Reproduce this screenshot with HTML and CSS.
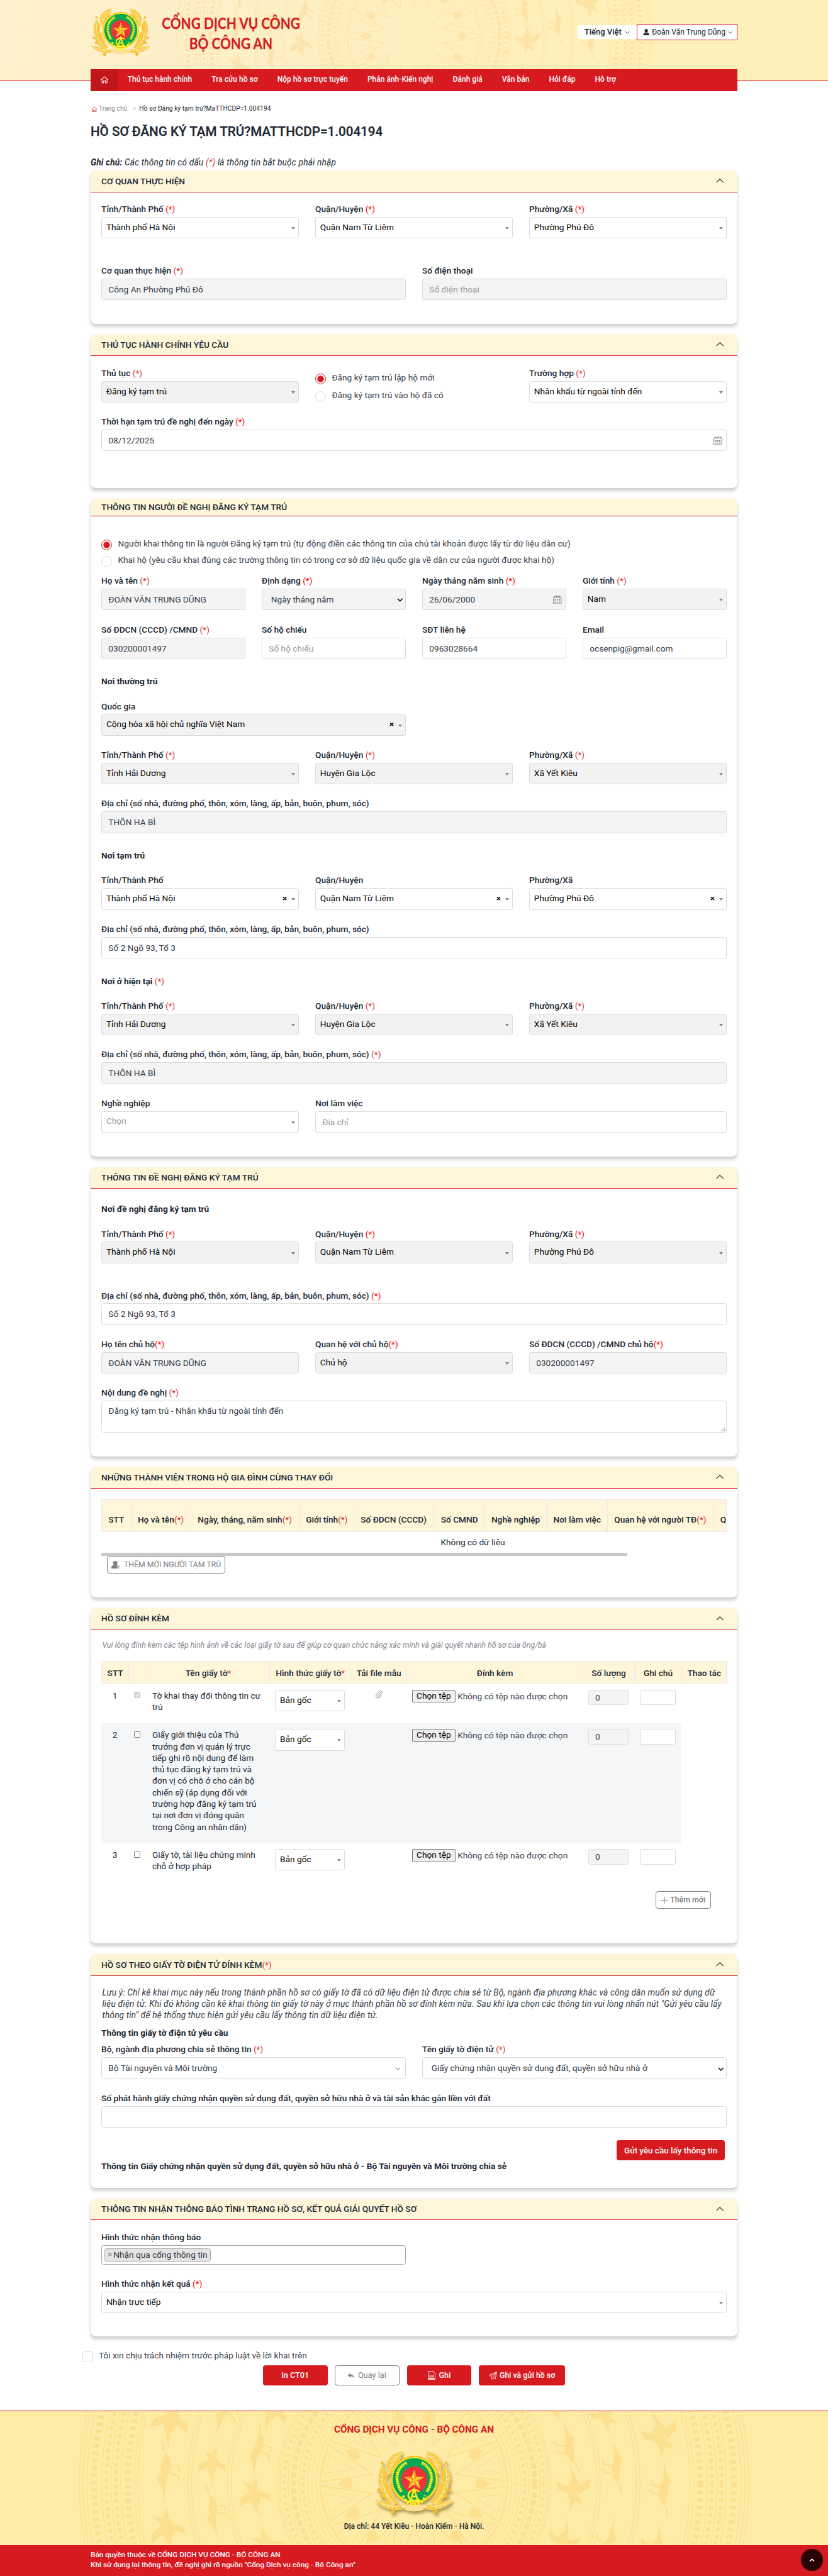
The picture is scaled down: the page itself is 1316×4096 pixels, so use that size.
FILE: index.html
```html
<!DOCTYPE html>
<html lang="vi">
<head>
<meta charset="utf-8">
<title>Cổng dịch vụ công - Bộ Công an</title>
<link rel="stylesheet" href="styles.css">
</head>
<body>
<svg class="defs" width="0" height="0" aria-hidden="true">
  <defs>
    <!-- bronze drum ornament, centred on 0,0 -->
    <g id="wedge" fill="none" stroke="currentColor" stroke-width="3">
      <path d="M0 -98 L-44 -214 H44Z"/><path d="M0 -128 L-32 -208 M0 -128 L32 -208" stroke-dasharray="2 6"/><path d="M0 -146 L-22 -206 H22Z" stroke-width="2"/>
      <path d="M0 -160c-5 12-14 20-10 32c3 8 17 8 20 0c4-12-5-20-10-32z" transform="rotate(12.857) translate(0 -20)" fill="currentColor" stroke="none"/>
      <path d="M31 -190a24 24 0 0 1 34 -8" stroke-width="5" stroke-dasharray="2 4"/>
    </g>
    <g id="wedge2"><use href="#wedge"/><use href="#wedge" transform="rotate(25.714)"/></g>
    <g id="bird" fill="currentColor" stroke="none">
      <path d="M-46 8 L-20 -4 C-12 -12 0 -12 8 -6 L34 -22 L26 -4 L44 6 L22 8 C10 16 -8 14 -18 4Z"/>
      <path d="M-4 -8 L-18 -34 L0 -30 L14 -8Z M0 10 L-12 34 L4 30 L14 8Z"/>
    </g>
    <g id="crane">
      <path fill="currentColor" d="M-60 4 L-22 -6 C-14 -18 -4 -16 2 -6 C18 -10 30 -2 48 0 L36 10 C20 16 4 12 -8 6 C-16 4 -22 2 -60 4Z"/>
      <path d="M4 10 L-2 30 L-12 32 M20 10 L18 30 L8 32 M48 -2 L70 -6" fill="none" stroke="currentColor" stroke-width="4"/>
    </g>
    <g id="drum">
      <g><use href="#wedge2"/><use href="#wedge2" transform="rotate(51.43)"/><use href="#wedge2" transform="rotate(102.86)"/><use href="#wedge2" transform="rotate(154.29)"/><use href="#wedge2" transform="rotate(205.71)"/><use href="#wedge2" transform="rotate(257.14)"/><use href="#wedge2" transform="rotate(308.57)"/></g>
      <g fill="none" stroke="currentColor" stroke-width="2">
        <circle r="218"/><circle r="227"/><circle r="237" stroke-width="4" stroke-dasharray="4 7"/><circle r="247"/>
        <circle r="257" stroke-width="8" stroke-dasharray="8 8"/><circle r="267"/><circle r="280" stroke-width="12" stroke-dasharray="14 5"/><circle r="292"/>
        <circle r="301" stroke-width="8" stroke-dasharray="8 8"/><circle r="310"/><circle r="316"/>
        <circle r="424"/><circle r="432"/><circle r="516"/><circle r="524"/><circle r="640"/><circle r="648"/>
        <circle r="664" stroke-width="14" stroke-dasharray="9 8"/><circle r="680"/><circle r="691" stroke-width="9" stroke-dasharray="9 8"/><circle r="702"/><circle r="713" stroke-width="9" stroke-dasharray="9 8"/><circle r="724"/>
        <circle r="742" stroke-width="14" stroke-dasharray="9 8"/><circle r="758"/><circle r="768"/><circle r="776"/>
      </g>
      <g id="flock">
        <g id="flockq">
          <use href="#bird" transform="rotate(8) translate(0 -370) scale(1.1)"/><use href="#crane" transform="rotate(24) translate(0 -372)"/><use href="#bird" transform="rotate(40) translate(0 -370) scale(1.2)"/>
          <use href="#crane" transform="rotate(4) translate(0 -472)"/><use href="#bird" transform="rotate(18) translate(0 -470)"/><use href="#crane" transform="rotate(33) translate(0 -472)"/>
          <use href="#bird" transform="rotate(2) translate(0 -582) scale(1.2)"/><use href="#crane" transform="rotate(15) translate(0 -580) scale(1.1)"/><use href="#bird" transform="rotate(27) translate(0 -582) scale(1.3)"/><use href="#crane" transform="rotate(39) translate(0 -582)"/>
        </g>
        <use href="#flockq" transform="rotate(51.43)"/><use href="#flockq" transform="rotate(102.86)"/><use href="#flockq" transform="rotate(154.29)"/><use href="#flockq" transform="rotate(205.71)"/><use href="#flockq" transform="rotate(257.14)"/><use href="#flockq" transform="rotate(308.57)"/>
      </g>
    </g>
    <!-- left half of the golden laurel -->
    <g id="laurel">
      <path fill="#f9cb45" stroke="#fbe6a0" stroke-width=".8" d="M47 1 C36 2 25 9 20 22 C22 30 20 38 22 44 C34 32 46 18 47 1Z"/>
      <path fill="#f8c63c" stroke="#fbe6a0" stroke-width=".8" d="M12 27 C5 38 3 50 9 66 C17 62 22 52 20 40 C18 34 15 30 12 27Z"/>
      <path fill="#f9cb45" stroke="#fbe6a0" stroke-width=".8" d="M10 58 C8 72 13 86 30 96 L40 92 C31 82 29 66 22 54Z"/>
      <path fill="#f9cb45" stroke="#fbe6a0" stroke-width=".8" d="M0 87 C8 88 24 90 34 96 L52 95 C56 96 56 101 52 102 L38 104 C26 104 8 100 0 87Z"/>
      <path d="M45 4 C34 18 27 26 23 40 M12 32 C12 45 12 52 11 62 M14 62 C18 76 25 88 34 94 M4 89 C16 96 28 99 40 99 M40 9l-9 3 M35 15l-10 4 M31 22l-8 4 M8 40l5 4 M6 48l6 4 M13 72l6 1 M18 80l6 0 M12 93l4 4 M20 94l4 6 M28 95l3 7" fill="none" stroke="#fdf0c0" stroke-width="1.2"/>
      <circle cx="12" cy="21" r="2.4" fill="#f4bb35"/><circle cx="6" cy="69" r="2.9" fill="#f4bb35"/><circle cx="11" cy="80" r="3" fill="#f4bb35"/><path d="M12 20l4 7M7 70l9 6M11 80l10 6M35 97l-3 8" stroke="#f4bb35" stroke-width="2"/><circle cx="31" cy="107" r="3.8" fill="#f4bb35"/>
      <ellipse cx="50" cy="98" rx="5" ry="2.3" fill="#fff6d8" stroke="#f4bb35" stroke-width="1"/>
    </g>
    <g id="ears" fill="none" stroke="#fdf01e">
      <path d="M55 21 C36 30 33 52 46 72" stroke-width="1.2"/><path d="M55 21 C36 30 33 52 46 72" stroke-width="5.5" stroke-dasharray="2.6 1.2"/>
    </g>
    <symbol id="emblem" viewBox="0 0 137 112">
      <path d="M52 95h33v9c-10 4-23 4-33 0z" fill="#fbe09a"/>
      <use href="#laurel"/><use href="#laurel" transform="translate(137 0) scale(-1 1)"/>
      <circle cx="68.5" cy="51" r="42.3" fill="#f9c22f"/><circle cx="68.5" cy="51" r="40" fill="#fdf01e"/><circle cx="68.5" cy="51" r="38.3" fill="#0aa651"/>
      <use href="#ears"/><use href="#ears" transform="translate(137 0) scale(-1 1)"/>
      <circle cx="68.5" cy="51" r="23.2" fill="#ee3338"/>
      <g fill="none" stroke="#fdf01e"><path d="M49 79a20 20 0 0 0 39 0" stroke-width="5" stroke-dasharray="4 2.5"/><path d="M77 72a11 9.500 0 1 0 0 13" stroke-width="3"/><path d="M62 88L68.500 68L75 88M59 88h6M72 88h7M65 81h8" stroke-width="3"/></g>
      <path fill="#ffdf1c" d="M68.500 33.500l4.300 12.600h13.300l-10.700 8 4 12.800-10.900-7.800-10.900 7.800 4-12.800-10.700-8h13.300z"/>
      <path fill="#f3913a" d="M68.500 33.500v19l4.300-6.400zM86.100 46.100l-17.600 6.400 6.900 1.600zM79.400 66.900l-10.900-14.400v6.600zM57.600 66.900l10.900-14.400-6.900 1.600zM50.900 46.100l17.600 6.400-4.300-6.400z"/>
    </symbol>
    <symbol id="home" viewBox="0 0 18 17"><path d="M1 8.500L9 1.200L17 8.500M3.200 7.500V16H7V11h4v5h3.800V7.500" fill="none" stroke="currentColor" stroke-width="1.500"/></symbol>
    <symbol id="up" viewBox="0 0 18 10"><path d="M.8 9L9 1.200L17.200 9" fill="none" stroke="currentColor" stroke-width="1.600"/></symbol>
    <symbol id="down" viewBox="0 0 14 8"><path d="M1 1l6 6 6-6" fill="none" stroke="currentColor" stroke-width="1.500"/></symbol>
    <symbol id="down-bold" viewBox="0 0 14 9"><path d="M1.300 1.300l5.700 5.700 5.700-5.700" fill="none" stroke="currentColor" stroke-width="2.600"/></symbol>
    <symbol id="calendar" viewBox="0 0 20 20"><path d="M1 3h18v16H1zM4.500 0v5M8.200 0v5M11.800 0v5M15.500 0v5" fill="none" stroke="currentColor" stroke-width="1.400"/><path d="M4 9.500h12M4 12.500h12M4 15.500h12" stroke="currentColor" stroke-width="2" stroke-dasharray="2.600 2" fill="none"/></symbol>
    <symbol id="clip" viewBox="0 0 18 20"><path d="M13.500 5.500L6.500 13.500a1.500 1.500 0 0 0 2.300 2L15.500 8a3.600 3.600 0 0 0-5.300-5L3 11.500a5 5 0 0 0 7.500 6.500L16 12" fill="none" stroke="currentColor" stroke-width="1.300"/></symbol>
    <symbol id="user" viewBox="0 0 16 16"><ellipse cx="8" cy="4.600" rx="4" ry="4.600" fill="currentColor"/><path d="M1 16c-.6-5 2-6.500 4.500-7l2.500 2.500L10.500 9c2.500.5 5.100 2 4.500 7z" fill="currentColor"/></symbol>
  </defs>
</svg>

<header class="header">
  <svg class="drum drum-top" viewBox="0 0 1920 186"><use href="#drum" transform="translate(960 84) scale(.71)"/></svg>
  <div class="header-in">
    <svg class="logo"><use href="#emblem"/></svg>
    <div class="brand"><span>CỔNG DỊCH VỤ CÔNG</span><span>BỘ CÔNG AN</span></div>
    <div class="tools">
      <div class="lang"><span>Tiếng Việt</span><svg width="12" height="7"><use href="#down"/></svg></div>
      <div class="account"><svg width="15" height="15"><use href="#user"/></svg><span>Đoàn Văn Trung Dũng</span><svg width="11" height="7"><use href="#down"/></svg></div>
    </div>
  </div>
</header>

<div class="page">
  <nav class="nav">
    <a class="nav-home"><svg width="18" height="17"><use href="#home"/></svg></a>
    <a>Thủ tục hành chính</a><a>Tra cứu hồ sơ</a><a>Nộp hồ sơ trực tuyến</a><a>Phản ánh-Kiến nghị</a><a>Đánh giá</a><a>Văn bản</a><a>Hỏi đáp</a><a>Hỗ trợ</a>
  </nav>
  <div class="crumbs"><svg width="14" height="14"><use href="#home"/></svg><span class="crumb-home">Trang chủ</span><span class="crumb-sep">&gt;</span><span class="crumb-here">Hồ sơ Đăng ký tạm trú?MaTTHCDP=1.004194</span></div>
  <h1>HỒ SƠ ĐĂNG KÝ TẠM TRÚ?MATTHCDP=1.004194</h1>
  <p class="note"><b>Ghi chú:</b> Các thông tin có dấu <i class="rq soft">(*)</i> là thông tin bắt buộc phải nhập</p>

  <section class="card card-agency">
    <div class="card-head"><h2>CƠ QUAN THỰC HIỆN</h2><svg class="fold"><use href="#up"/></svg></div>
    <div class="card-body">
      <div class="row c3 roomy">
        <div class="fld"><label>Tỉnh/Thành Phố <i class="rq">(*)</i></label><div class="sel">Thành phố Hà Nội</div></div>
        <div class="fld"><label>Quận/Huyện <i class="rq">(*)</i></label><div class="sel">Quận Nam Từ Liêm</div></div>
        <div class="fld"><label>Phường/Xã <i class="rq">(*)</i></label><div class="sel">Phường Phú Đô</div></div>
      </div>
      <div class="row c2">
        <div class="fld"><label>Cơ quan thực hiện <i class="rq soft">(*)</i></label><div class="inp off">Công An Phường Phú Đô</div></div>
        <div class="fld"><label>Số điện thoại</label><div class="inp off hint">Số điện thoại</div></div>
      </div>
    </div>
  </section>

  <section class="card card-proc">
    <div class="card-head"><h2>THỦ TỤC HÀNH CHÍNH YÊU CẦU</h2><svg class="fold"><use href="#up"/></svg></div>
    <div class="card-body">
      <div class="row c3">
        <div class="fld"><label>Thủ tục <i class="rq soft">(*)</i></label><div class="sel off">Đăng ký tạm trú</div></div>
        <div class="radios radios-proc">
          <div class="radio on"><b></b><span>Đăng ký tạm trú lập hộ mới</span></div>
          <div class="radio"><b></b><span>Đăng ký tạm trú vào hộ đã có</span></div>
        </div>
        <div class="fld"><label>Trường hợp <i class="rq soft">(*)</i></label><div class="sel">Nhân khẩu từ ngoài tỉnh đến</div></div>
      </div>
      <div class="row c1">
        <div class="fld"><label>Thời hạn tạm trú đề nghị đến ngày <i class="rq">(*)</i></label><div class="inp">08/12/2025<svg class="cal"><use href="#calendar"/></svg></div></div>
      </div>
    </div>
  </section>

  <section class="card card-person">
    <div class="card-head short"><h2>THÔNG TIN NGƯỜI ĐỀ NGHỊ ĐĂNG KÝ TẠM TRÚ</h2></div>
    <div class="card-body">
      <div class="radios radios-who">
        <div class="radio on"><b></b><span>Người khai thông tin là người Đăng ký tạm trú (tự động điền các thông tin của chủ tài khoản được lấy từ dữ liệu dân cư)</span></div>
        <div class="radio"><b></b><span>Khai hộ (yêu cầu khai đúng các trường thông tin có trong cơ sở dữ liệu quốc gia về dân cư của người được khai hộ)</span></div>
      </div>
      <div class="row c4">
        <div class="fld"><label>Họ và tên <i class="rq soft">(*)</i></label><div class="inp off">ĐOÀN VĂN TRUNG DŨNG</div></div>
        <div class="fld"><label>Định dạng <i class="rq">(*)</i></label><div class="inp off native">Ngày tháng năm<svg class="chev" width="14" height="9"><use href="#down-bold"/></svg></div></div>
        <div class="fld"><label>Ngày tháng năm sinh <i class="rq">(*)</i></label><div class="inp off">26/06/2000<svg class="cal"><use href="#calendar"/></svg></div></div>
        <div class="fld"><label>Giới tính <i class="rq soft">(*)</i></label><div class="sel off">Nam</div></div>
      </div>
      <div class="row c4">
        <div class="fld"><label>Số ĐDCN (CCCD) /CMND <i class="rq soft">(*)</i></label><div class="inp off">030200001497</div></div>
        <div class="fld"><label>Số hộ chiếu</label><div class="inp hint">Số hộ chiếu</div></div>
        <div class="fld"><label>SĐT liên hệ</label><div class="inp">0963028664</div></div>
        <div class="fld"><label>Email</label><div class="inp">ocsenpig@gmail.com</div></div>
      </div>
      <h3>Nơi thường trú</h3>
      <div class="row c2">
        <div class="fld"><label>Quốc gia</label><div class="sel off"><span>Cộng hòa xã hội chủ nghĩa Việt Nam</span><em>×</em></div></div>
      </div>
      <div class="row c3">
        <div class="fld"><label>Tỉnh/Thành Phố <i class="rq soft">(*)</i></label><div class="sel off">Tỉnh Hải Dương</div></div>
        <div class="fld"><label>Quận/Huyện <i class="rq soft">(*)</i></label><div class="sel off">Huyện Gia Lộc</div></div>
        <div class="fld"><label>Phường/Xã <i class="rq soft">(*)</i></label><div class="sel off">Xã Yết Kiêu</div></div>
      </div>
      <div class="row c1"><div class="fld"><label>Địa chỉ (số nhà, đường phố, thôn, xóm, làng, ấp, bản, buôn, phum, sóc)</label><div class="inp off">THÔN HẠ BÌ</div></div></div>
      <h3>Nơi tạm trú</h3>
      <div class="row c3">
        <div class="fld"><label>Tỉnh/Thành Phố</label><div class="sel"><span>Thành phố Hà Nội</span><em>×</em></div></div>
        <div class="fld"><label>Quận/Huyện</label><div class="sel"><span>Quận Nam Từ Liêm</span><em>×</em></div></div>
        <div class="fld"><label>Phường/Xã</label><div class="sel"><span>Phường Phú Đô</span><em>×</em></div></div>
      </div>
      <div class="row c1"><div class="fld"><label>Địa chỉ (số nhà, đường phố, thôn, xóm, làng, ấp, bản, buôn, phum, sóc)</label><div class="inp">Số 2 Ngõ 93, Tổ 3</div></div></div>
      <h3>Nơi ở hiện tại <i class="rq soft">(*)</i></h3>
      <div class="row c3">
        <div class="fld"><label>Tỉnh/Thành Phố <i class="rq soft">(*)</i></label><div class="sel off">Tỉnh Hải Dương</div></div>
        <div class="fld"><label>Quận/Huyện <i class="rq soft">(*)</i></label><div class="sel off">Huyện Gia Lộc</div></div>
        <div class="fld"><label>Phường/Xã <i class="rq soft">(*)</i></label><div class="sel off">Xã Yết Kiêu</div></div>
      </div>
      <div class="row c1"><div class="fld"><label>Địa chỉ (số nhà, đường phố, thôn, xóm, làng, ấp, bản, buôn, phum, sóc) <i class="rq soft">(*)</i></label><div class="inp off">THÔN HẠ BÌ</div></div></div>
      <div class="row c3">
        <div class="fld"><label>Nghề nghiệp</label><div class="sel hint">Chọn</div></div>
        <div class="fld span2"><label>Nơi làm việc</label><div class="inp hint">Địa chỉ</div></div>
      </div>
    </div>
  </section>

  <section class="card card-request">
    <div class="card-head"><h2>THÔNG TIN ĐỀ NGHỊ ĐĂNG KÝ TẠM TRÚ</h2><svg class="fold"><use href="#up"/></svg></div>
    <div class="card-body">
      <h3>Nơi đề nghị đăng ký tạm trú</h3>
      <div class="row c3 roomy">
        <div class="fld"><label>Tỉnh/Thành Phố <i class="rq">(*)</i></label><div class="sel off">Thành phố Hà Nội</div></div>
        <div class="fld"><label>Quận/Huyện <i class="rq">(*)</i></label><div class="sel off">Quận Nam Từ Liêm</div></div>
        <div class="fld"><label>Phường/Xã <i class="rq">(*)</i></label><div class="sel off">Phường Phú Đô</div></div>
      </div>
      <div class="row c1"><div class="fld"><label>Địa chỉ (số nhà, đường phố, thôn, xóm, làng, ấp, bản, buôn, phum, sóc) <i class="rq">(*)</i></label><div class="inp">Số 2 Ngõ 93, Tổ 3</div></div></div>
      <div class="row c3">
        <div class="fld"><label>Họ tên chủ hộ<i class="rq">(*)</i></label><div class="inp off">ĐOÀN VĂN TRUNG DŨNG</div></div>
        <div class="fld"><label>Quan hệ với chủ hộ<i class="rq">(*)</i></label><div class="sel off">Chủ hộ</div></div>
        <div class="fld"><label>Số ĐDCN (CCCD) /CMND chủ hộ<i class="rq">(*)</i></label><div class="inp off">030200001497</div></div>
      </div>
      <div class="row c1"><div class="fld"><label>Nội dung đề nghị <i class="rq soft">(*)</i></label><div class="inp area">Đăng ký tạm trú - Nhân khẩu từ ngoài tỉnh đến<svg class="grip" viewBox="0 0 10 10"><path d="M0 10L9 0M5 10L10 5" stroke="#555" stroke-width="1.200"/></svg></div></div></div>
    </div>
  </section>

  <section class="card card-family">
    <div class="card-head"><h2>NHỮNG THÀNH VIÊN TRONG HỘ GIA ĐÌNH CÙNG THAY ĐỔI</h2><svg class="fold"><use href="#up"/></svg></div>
    <div class="card-body">
      <div class="fam-scroll">
        <div class="fam-head"><div>STT</div><div>Họ và tên<i class="rq soft">(*)</i></div><div>Ngày, tháng, năm sinh<i class="rq soft">(*)</i></div><div>Giới tính<i class="rq soft">(*)</i></div><div>Số ĐDCN (CCCD)</div><div>Số CMND</div><div>Nghề nghiệp</div><div>Nơi làm việc</div><div>Quan hệ với người TĐ<i class="rq soft">(*)</i></div><div>Q</div></div>
        <div class="fam-empty">Không có dữ liệu</div>
      </div>
      <div class="fam-bar"></div>
      <div class="btn line fam-add"><svg width="20" height="18" viewBox="0 0 20 18"><ellipse cx="9" cy="5" rx="5" ry="5" fill="#7b8086"/><path d="M0 18v-4c1-3 4-4 6-4h6c3 0 5 1 6 4v4z" fill="#7b8086"/><path d="M16 9v8M12.500 13h7" stroke="#fff" stroke-width="3"/><path d="M16 10v6M13 13h6" stroke="#7b8086" stroke-width="1.200"/></svg>THÊM MỚI NGƯỜI TẠM TRÚ</div>
    </div>
  </section>

  <section class="card card-files">
    <div class="card-head"><h2>HỒ SƠ ĐÍNH KÈM</h2><svg class="fold"><use href="#up"/></svg></div>
    <div class="card-body">
      <p class="files-tip">Vui lòng đính kèm các tệp hình ảnh về các loại giấy tờ sau để giúp cơ quan chức năng xác minh và giải quyết nhanh hồ sơ của ông/bà</p>
      <div class="ft ft-head"><div>STT</div><div></div><div>Tên giấy tờ<i class="rq soft">*</i></div><div>Hình thức giấy tờ<i class="rq soft">*</i></div><div>Tải file mẫu</div><div>Đính kèm</div><div>Số lượng</div><div>Ghi chú</div><div>Thao tác</div></div>
      <div class="ft ft-row">
        <div class="mid">1</div><div class="tick"><span class="box ticked"><svg viewBox="0 0 15 15"><path d="M3 7.500l3 3.500 6-8" fill="none" stroke="#fff" stroke-width="2"/></svg></span></div>
        <div>Tờ khai thay đổi thông tin cư<br>trú</div><div><div class="sel">Bản gốc</div></div>
        <div class="clip"><svg width="18" height="20"><use href="#clip"/></svg></div>
        <div class="file"><span class="pick">Chọn tệp</span><span>Không có tệp nào được chọn</span></div>
        <div><div class="inp off mini">0</div></div><div><div class="inp mini"></div></div><div></div>
      </div>
      <div class="ft ft-row tall">
        <div class="mid">2</div><div class="tick"><span class="box"></span></div>
        <div>Giấy giới thiệu của Thủ<br>trưởng đơn vị quản lý trực<br>tiếp ghi rõ nội dung để làm<br>thủ tục đăng ký tạm trú và<br>đơn vị có chỗ ở cho cán bộ<br>chiến sỹ (áp dụng đối với<br>trường hợp đăng ký tạm trú<br>tại nơi đơn vị đóng quân<br>trong Công an nhân dân)</div><div><div class="sel">Bản gốc</div></div>
        <div></div>
        <div class="file"><span class="pick">Chọn tệp</span><span>Không có tệp nào được chọn</span></div>
        <div><div class="inp off mini">0</div></div><div><div class="inp mini"></div></div><div class="blank"></div>
      </div>
      <div class="ft ft-row">
        <div class="mid">3</div><div class="tick"><span class="box"></span></div>
        <div>Giấy tờ, tài liệu chứng minh<br>chỗ ở hợp pháp</div><div><div class="sel">Bản gốc</div></div>
        <div></div>
        <div class="file"><span class="pick">Chọn tệp</span><span>Không có tệp nào được chọn</span></div>
        <div><div class="inp off mini">0</div></div><div><div class="inp mini"></div></div><div></div>
      </div>
      <div class="btn line files-add"><svg width="17" height="17" viewBox="0 0 17 17"><path d="M8.500 0v17M0 8.500h17" stroke="currentColor" stroke-width="1.600"/></svg>Thêm mới</div>
    </div>
  </section>

  <section class="card card-edoc">
    <div class="card-head"><h2>HỒ SƠ THEO GIẤY TỜ ĐIỆN TỬ ĐÍNH KÈM<i class="rq soft">(*)</i></h2><svg class="fold"><use href="#up"/></svg></div>
    <div class="card-body">
      <p class="edoc-tip">Lưu ý: Chỉ kê khai mục này nếu trong thành phần hồ sơ có giấy tờ đã có dữ liệu điện tử được chia sẻ từ Bộ, ngành địa phương khác và công dân muốn sử dụng dữ<br>liệu điện tử. Khi đó không cần kê khai thông tin giấy tờ này ở mục thành phần hồ sơ đính kèm nữa. Sau khi lựa chọn các thông tin vui lòng nhấn nút "Gửi yêu cầu lấy<br>thông tin" để hệ thống thực hiện gửi yêu cầu lấy thông tin dữ liệu điện tử.</p>
      <h4>Thông tin giấy tờ điện tử yêu cầu</h4>
      <div class="row c2">
        <div class="fld"><label>Bộ, ngành địa phương chia sẻ thông tin <i class="rq soft">(*)</i></label><div class="inp">Bộ Tài nguyên và Môi trường<svg class="chev far" width="12" height="7"><use href="#down"/></svg></div></div>
        <div class="fld"><label>Tên giấy tờ điện tử <i class="rq soft">(*)</i></label><div class="inp native">Giấy chứng nhận quyền sử dụng đất, quyền sở hữu nhà ở<svg class="chev" width="14" height="9"><use href="#down-bold"/></svg></div></div>
      </div>
      <div class="row c1"><div class="fld"><label>Số phát hành giấy chứng nhận quyền sử dụng đất, quyền sở hữu nhà ở và tài sản khác gắn liền với đất</label><div class="inp"></div></div></div>
      <div class="btn red edoc-send">Gửi yêu cầu lấy thông tin</div>
      <h4>Thông tin Giấy chứng nhận quyền sử dụng đất, quyền sở hữu nhà ở - Bộ Tài nguyên và Môi trường chia sẻ</h4>
    </div>
  </section>

  <section class="card card-notify">
    <div class="card-head"><h2>THÔNG TIN NHẬN THÔNG BÁO TÌNH TRẠNG HỒ SƠ, KẾT QUẢ GIẢI QUYẾT HỒ SƠ</h2><svg class="fold"><use href="#up"/></svg></div>
    <div class="card-body">
      <div class="row c2"><div class="fld"><label>Hình thức nhận thông báo</label><div class="multi"><span class="tag"><b>×</b>Nhận qua cổng thông tin</span></div></div></div>
      <div class="row c1"><div class="fld"><label>Hình thức nhận kết quả <i class="rq">(*)</i></label><div class="sel">Nhận trực tiếp</div></div></div>
    </div>
  </section>

  <div class="agree"><b></b><span>Tôi xin chịu trách nhiệm trước pháp luật về lời khai trên</span></div>
  <div class="actions">
    <div class="btn red">In CT01</div>
    <div class="btn line"><svg width="15" height="13" viewBox="0 0 15 13"><path d="M0 5.500L6 0v3.500c5 .3 8 3 8.500 9.500C13 9 10.500 8 6 8v3.500z" fill="currentColor"/></svg>Quay lại</div>
    <div class="btn red"><svg width="18" height="21" viewBox="0 0 18 21"><path d="M1 1h11l5 5v14H1zM4.500 9.500h9v7h-9zM6.500 13h5M1 18h16" fill="none" stroke="#fff" stroke-width="1.400"/></svg>Ghi</div>
    <div class="btn red wide"><svg width="19" height="19" viewBox="0 0 19 19"><path d="M18 1L1 8l4 3.500L7.500 18l3-4 4.500 3zM18 1L5 11.500M18 1l-7.500 13" fill="none" stroke="#fff" stroke-width="1.300" stroke-linejoin="round"/></svg>Ghi và gửi hồ sơ</div>
  </div>
</div>

<footer class="footer">
  <div class="foot-main">
    <svg class="drum drum-foot" viewBox="0 0 1920 310"><use href="#drum" transform="translate(960 168)"/></svg>
    <h5>CỔNG DỊCH VỤ CÔNG - BỘ CÔNG AN</h5>
    <svg class="foot-logo"><use href="#emblem"/></svg>
    <p>Địa chỉ: 44 Yết Kiêu - Hoàn Kiếm - Hà Nội.</p>
  </div>
  <div class="foot-bar">
    <div><p>Bản quyền thuộc về CỔNG DỊCH VỤ CÔNG - BỘ CÔNG AN</p><p>Khi sử dụng lại thông tin, đề nghị ghi rõ nguồn "Cổng Dịch vụ công - Bộ Công an"</p></div>
    <a class="to-top"><svg width="13" height="8"><use href="#down-bold"/></svg></a>
  </div>
</footer>
</body>
</html>
```
FILE: styles.css
```css
* { box-sizing: border-box; }
html { margin: 0; overflow: hidden; }
body {
  margin: 0; width: 1920px; height: 5976px; zoom: .6854; overflow: hidden;
  background: #fff; color: #212833;
  font: 400 20px/27px Roboto, "Noto Sans", sans-serif;
}
h1, h2, h3, h4, h5, p { margin: 0; }
i.rq { font-style: normal; font-weight: 400; color: #f00; }
i.rq.soft { color: #d43434; }
svg { display: block; flex: none; }
.defs { position: absolute; }

.header {
  position: relative; height: 188px; border-bottom: 2px solid #d71920; overflow: hidden;
  background: linear-gradient(90deg, #fcefcb 0%, #fdf0c8 25%, #ffefb8 70%, #fff0b9 100%);
}
.drum { position: absolute; inset: 0; width: 100%; }
.drum-top { height: 186px; color: #f9be63; opacity: .22; }
.header-in { position: relative; width: 1500px; margin: 0 auto; display: flex; }
.logo { width: 137px; height: 112px; margin: 19px 0 0 1px; }
.brand {
  width: 330px; margin: 31px 0 0 22px; white-space: nowrap;
  display: flex; flex-direction: column; align-items: center;
  font: 700 35px/47px Lato, "Noto Sans", sans-serif; color: #d71920;
  text-shadow: 0 2px 3px rgba(120, 60, 0, .3);
}
.brand span { display: block; transform: scaleX(.872); }
.tools { margin-left: auto; display: flex; align-items: center; height: 150px; white-space: nowrap; }
.lang { width: 136px; height: 32px; padding: 0 0 0 15px; display: flex; align-items: center; gap: 8px; background: #fff; border-radius: 5px; font-weight: 500; font-size: 19px; }
.account { width: 234px; height: 38px; padding: 0 0 0 13px; display: flex; align-items: center; gap: 6px; background: #fff; border: 1px solid #d71920; font-size: 17.700px; }

.page { position: relative; width: 1500px; height: 5404px; margin: -27px auto 0; }
.nav { display: flex; height: 50px; background: #d71920; border-radius: 1px; }
.nav a { padding: 0 22.700px; line-height: 49px; color: #fff; font-weight: 500; font-size: 17.550px; white-space: nowrap; }
.nav .nav-home { width: 63px; padding: 16px 0 0 23px; background: #c0161c; border-radius: 0 3px 3px 0; }
.crumbs { display: flex; align-items: center; height: 24px; margin-top: 30px; font-size: 15px; white-space: nowrap; color: #d71920; }
.crumbs svg { margin-left: 1px; }
.crumb-home { margin-left: 4px; color: #888; }
.crumb-sep { margin-left: 12px; color: #bbb; }
.crumb-here { margin-left: 8px; color: #212833; }
h1 { margin-top: 23px; font: 500 30.100px/36px Roboto, sans-serif; white-space: nowrap; -webkit-text-stroke: .4px; }
.note { margin-top: 39px; font-style: italic; white-space: nowrap; height: 33px; line-height: 28px; letter-spacing: .27px; }
.note .rq { font-style: italic; }

.card { margin-bottom: 25px; border-radius: 12px; background: #fff; box-shadow: 0 7px 8px -1px rgba(0, 0, 0, .17), 0 0 4px rgba(0, 0, 0, .09); }
.card-agency { height: 355px; }
.card-proc { height: 356px; }
.card-person { height: 1526px; }
.card-request { height: 671px; }
.card-family { height: 302px; }
.card-files { height: 778px; }
.card-edoc { height: 542px; }
.card-notify { height: 320px; margin-bottom: 0; }
.card-head { display: flex; align-items: center; justify-content: space-between; height: 50px; padding: 0 32px 0 25px; background: #fff6da; border-bottom: 2px solid #d71920; border-radius: 12px 12px 0 0; }
.card-head.short { height: 41px; }
h2 { font: 500 20px/27px Roboto, sans-serif; white-space: nowrap; }
h2 .rq { font-weight: 400; }
.fold { width: 18px; height: 10px; margin-top: -2px; }
.card-body { padding: 26px 25px 24px; }
.card-agency .card-body { padding-top: 25px; }

.row { display: grid; column-gap: 38px; margin-bottom: 31px; }
.row.roomy { margin-bottom: 61px; }
.c1 { grid-template-columns: minmax(0, 1fr); }
.c2 { grid-template-columns: repeat(2, minmax(0, 1fr)); }
.c3 { grid-template-columns: repeat(3, minmax(0, 1fr)); }
.c4 { grid-template-columns: repeat(4, minmax(0, 1fr)); }
.span2 { grid-column: span 2; }
label { display: block; margin-bottom: 5px; font-weight: 500; white-space: nowrap; }
.sel, .inp { position: relative; height: 50px; border: 1px solid #dcdcdc; border-radius: 5px; background: #fff; white-space: nowrap; }
.sel { display: flex; align-items: center; justify-content: space-between; padding: 0 27px 3px 10px; color: #000; }
.sel::after { content: ""; position: absolute; right: 7px; top: 22px; border: 5px solid transparent; border-top: 6px solid #888; border-bottom: 0; }
.sel em { font: 700 20px/20px Roboto, sans-serif; margin-right: -1px; }
.inp { padding: 0 15px; line-height: 49px; color: #333b45; }
.inp.native { padding-left: 20px; }
.sel.off { background: #f2f2f2; }
.inp.off { background: #f4f4f4; }
.sel.hint, .inp.hint { color: #999; }
.inp.area { height: 74px; padding-top: 8px; line-height: 27px; }
.grip { position: absolute; right: 2px; bottom: 1px; width: 10px; height: 10px; }
.cal { position: absolute; right: 9px; top: 14px; width: 20px; height: 20px; color: #777; }
.chev { position: absolute; right: 5px; top: 21px; color: #222; }
.chev.far { right: 12px; color: #555; }
h3 { height: 65px; padding-top: 8px; font: 700 20px/27px Roboto, sans-serif; white-space: nowrap; }
h4 { font: 700 20px/27px Roboto, sans-serif; white-space: nowrap; }

.radios { display: flex; flex-direction: column; color: #3a424c; }
.radio { display: flex; align-items: flex-start; gap: 13.500px; height: 25px; white-space: nowrap; line-height: 18px; }
.radio b { width: 25px; height: 25px; flex: none; border: 1px solid #dcdcdc; border-radius: 50%; background: #fff; }
.radio.on b { border: 1.500px solid #d71920; background: radial-gradient(circle, #d71920 7px, #fff 8px); }
.radios-proc { padding-top: 15px; gap: 15px; }
.radios-who { padding: 28px 0 19px; gap: 13px; }

.btn { display: flex; align-items: center; justify-content: center; border-radius: 6px; font-weight: 500; font-size: 18px; white-space: nowrap; }
.btn.red { background: #d71920; color: #fff; }
.btn.line { border: 1px solid #7b8086; color: #7b8086; background: #fff; }

.card-family .card-body { padding-top: 24px; }
.fam-scroll { overflow: hidden; }
.fam-head { display: grid; grid-template-columns: 68px 139px 251px 127px 186px 117px 144px 141px 246px 31px; height: 76px; background: #fff6da; border: 1px solid #e9e9ee; font-weight: 500; }
.fam-head div { padding: 32px 0 0 15px; border-right: 1px solid #e9e9ee; white-space: nowrap; }
.fam-head div:last-child { border: 0; }
.fam-empty { height: 49px; padding: 11px 0 0 787px; white-space: nowrap; }
.fam-bar { width: 1219px; height: 7px; background: #c9c9c9; }
.fam-add { width: 275px; height: 41px; margin-left: 13px; gap: 9px; font-weight: 400; padding-bottom: 1px; }

.files-tip { padding: 0 2px; height: 47px; color: #85898f; font-size: 18px; font-style: italic; line-height: 22px; white-space: nowrap; }
.ft { display: grid; grid-template-columns: 63px 42px 285px 188px 130px 408px 120px 109px 105px; }
.ft > div { padding: 13px; min-width: 0; }
.ft-head { height: 53px; background: #fff6da; border: 1px solid #e9e9ee; font-weight: 500; text-align: center; }
.ft-head > div { padding: 12px 0; border-right: 1px solid #e9e9ee; white-space: nowrap; }
.ft-row { height: 91.500px; line-height: 26.700px; }
.ft-row > div { white-space: nowrap; }
.ft-row.tall { height: 278.500px; background: #f4f6f8; }
.ft-row > .mid { text-align: center; }
.ft-row > .tick { padding: 18px 0 0 13px; }
.blank { background: #fff; }
.box { display: block; width: 15px; height: 15px; border: 1px solid #767676; border-radius: 2px; background: #fff; }
.box.ticked { background: #d2d2d2; border-color: #d2d2d2; }
.box svg { margin: -1px; width: 15px; height: 15px; }
.ft-row > .clip { padding: 14px 0 0 56px; color: #7b8086; }
.ft-row > .file { display: flex; align-items: center; align-self: start; gap: 5px; color: #3a424c; padding-right: 0; }
.pick { width: 100px; height: 30px; line-height: 26px; text-align: center; background: #efefef; border: 1px solid #767676; border-radius: 3px; color: #000; }
.inp.mini { height: 36px; line-height: 35px; }
.files-add { width: 128px; height: 41px; margin: 19.500px 37px 0 auto; gap: 5px; }

.card-edoc .card-body { padding-top: 25px; }
.edoc-tip { height: 94px; padding: 0 2px; font-style: italic; line-height: 26.400px; white-space: nowrap; color: #333b45; letter-spacing: .24px; }
.edoc-tip + h4 { height: 38px; }
.btn.edoc-send { width: 251px; height: 46px; margin: -1px 4px 0 auto; font-size: 19.700px; }

.multi { height: 45px; padding: 6px; border: 1px solid #aaa; border-radius: 5px; }
.tag { display: flex; width: 246px; align-items: center; justify-content: center; height: 30px; background: #e4e4e4; border: 1px solid #aaa; border-radius: 5px; white-space: nowrap; color: #333b45; }
.tag b { margin-right: 3px; color: #999; font-size: 19px; }

.agree { display: flex; gap: 13px; margin: 35px 0 7px -19px; height: 25px; line-height: 18px; color: #3a424c; white-space: nowrap; }
.agree b { width: 25px; height: 25px; border: 1px solid #dcdcdc; border-radius: 3px; }
.actions { display: flex; justify-content: center; gap: 17px; }
.actions .btn { width: 150px; height: 46px; gap: 8px; font-size: 18.500px; }
.actions .btn.wide { width: 200px; gap: 6px; font-size: 18px; }
.actions .btn.line { font-weight: 400; }

.foot-main { position: relative; margin-top: 27px; height: 312px; border-top: 2px solid #d71920; background: #feeba6; overflow: hidden; text-align: center; }
.drum-foot { height: 310px; color: #fbc75b; opacity: .3; }
.foot-main h5, .foot-main p, .foot-logo { position: relative; }
h5 { padding-top: 30px; font: 700 22.300px/28px Roboto, sans-serif; color: #d71920; white-space: nowrap; }
.foot-logo { width: 182px; height: 147px; margin: 35px auto 0; filter: drop-shadow(3px 7px 3px rgba(90, 70, 0, .5)); }
.foot-main p { margin-top: 14px; font-weight: 500; font-size: 17.600px; white-space: nowrap; }
.foot-bar { display: flex; justify-content: space-between; height: 72px; padding: 13px 12px 0 210px; background: #d71920; color: #fff; font-weight: 500; font-size: 17.250px; line-height: 23px; white-space: nowrap; }
.to-top { width: 50px; height: 50px; margin-top: -3px; display: flex; align-items: center; justify-content: center; border-radius: 50%; background: #2b0305; }
.to-top svg { transform: rotate(180deg); }
```
